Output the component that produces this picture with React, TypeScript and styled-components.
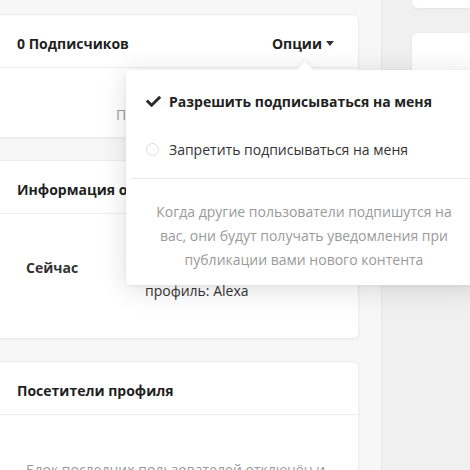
import React from 'react';
import styled, { createGlobalStyle } from 'styled-components';

const GlobalStyle = createGlobalStyle`
  html, body {
    margin: 0;
    padding: 0;
    background: #f6f6f6;
  }
  body {
    font-family: 'Open Sans', 'Noto Sans', sans-serif;
    font-size: 14px;
    color: #222;
  }
`;

const Page = styled.div`
  position: relative;
  display: flex;
  width: 470px;
  height: 470px;
  overflow: hidden;
`;

const Main = styled.div`
  width: 357px;
  flex-shrink: 0;
  padding: 14px 24px 0 0;
  display: flex;
  flex-direction: column;
  gap: 22px;
  background: #f7f7f7;
  border-right: 1px solid #e6e6e6;
`;

const Sidebar = styled.div`
  flex: 1;
  padding-left: 30px;
  margin-top: -40px;
  display: flex;
  flex-direction: column;
  gap: 25px;
  background: #f0f0f0;
`;

const SideCard = styled.div<{ $h: number }>`
  height: ${(p) => p.$h}px;
  background: #fff;
  border-radius: 6px 0 0 6px;
  box-shadow: 0 1px 3px rgba(0, 0, 0, 0.05);
`;

const Card = styled.div`
  margin-left: -8px;
  width: 365px;
  background: #fff;
  border: 1px solid #ececec;
  border-radius: 6px;
  box-shadow: 0 1px 3px rgba(0, 0, 0, 0.04);
`;

const CardHeader = styled.div`
  height: 53px;
  padding: 4px 24px 0;
  display: flex;
  align-items: center;
  justify-content: space-between;
  border-bottom: 1px solid #ececec;
  font-weight: 700;
  font-size: 14px;
  color: #1f1f1f;
  box-sizing: border-box;
`;

const OptionsButton = styled.span`
  display: inline-flex;
  align-items: center;
  gap: 4px;
  font-weight: 700;
  color: #222;
  cursor: pointer;
`;

const Caret = styled.span`
  width: 0;
  height: 0;
  border-left: 4px solid transparent;
  border-right: 4px solid transparent;
  border-top: 5px solid #333;
  margin-top: 1px;
`;

const EmptyText = styled.div<{ $pt: number; $pb: number }>`
  padding: ${(p) => p.$pt}px 24px ${(p) => p.$pb}px;
  text-align: center;
  color: #9a9a9a;
  line-height: 20px;
`;

const InfoRow = styled.div`
  display: flex;
  align-items: center;
  padding: 17px 24px 35px 33px;
`;

const InfoLabel = styled.div`
  width: 119px;
  flex-shrink: 0;
  font-weight: 700;
  color: #333;
`;

const InfoValue = styled.div`
  line-height: 24px;
  color: #333;
`;

const Dropdown = styled.div`
  position: absolute;
  left: 126px;
  top: 70px;
  width: 356px;
  background: #fff;
  border-radius: 4px;
  box-shadow: 0 4px 28px rgba(0, 0, 0, 0.13), 0 1px 4px rgba(0, 0, 0, 0.06);
  &::before {
    content: '';
    position: absolute;
    top: -6px;
    left: 173px;
    width: 12px;
    height: 12px;
    background: #fff;
    transform: rotate(45deg);
    box-shadow: -2px -2px 4px rgba(0, 0, 0, 0.04);
  }
`;

const MenuList = styled.div`
  position: relative;
  padding: 7px 0 5px;
  border-bottom: 1px solid #e8e8e8;
  margin-left: 5px;
`;

const MenuItem = styled.div<{ $active?: boolean }>`
  height: 48px;
  display: flex;
  align-items: center;
  gap: 6px;
  padding-left: 14px;
  font-weight: ${(p) => (p.$active ? 700 : 400)};
  color: ${(p) => (p.$active ? '#222' : '#333')};
  cursor: pointer;
`;

const IconSlot = styled.span`
  width: 18px;
  display: inline-flex;
  align-items: center;
  justify-content: flex-start;
`;

const Radio = styled.span`
  width: 11px;
  height: 11px;
  margin-left: 1px;
  border: 1px solid #dcdcdc;
  border-radius: 50%;
`;

const MenuNote = styled.div`
  padding: 21px 20px 13px;
  text-align: center;
  line-height: 24px;
  color: #9a9a9a;
`;

function CheckIcon() {
  return (
    <svg width="17" height="15" viewBox="0 0 512 512" fill="#2b2b2b">
      <path d="M173.9 439.4l-166.4-166.4c-10-10-10-26.2 0-36.2l36.2-36.2c10-10 26.2-10 36.2 0L192 312.7 432.1 72.6c10-10 26.2-10 36.2 0l36.2 36.2c10 10 10 26.2 0 36.2L210.1 439.4c-10 10-26.2 10-36.2 0z" />
    </svg>
  );
}

export default function App() {
  return (
    <>
      <GlobalStyle />
      <Page>
        <Main>
          <Card>
            <CardHeader>
              <span>0 Подписчиков</span>
              <OptionsButton>
                Опции <Caret />
              </OptionsButton>
            </CardHeader>
            <EmptyText $pt={37} $pb={12}>Подписчиков нет</EmptyText>
          </Card>
          <Card>
            <CardHeader>
              <span>Информация о профиле</span>
            </CardHeader>
            <InfoRow>
              <InfoLabel>Сейчас</InfoLabel>
              <InfoValue>
                Последний посетитель
                <br />
                просматривал ваш
                <br />
                профиль: Alexa
              </InfoValue>
            </InfoRow>
          </Card>
          <Card>
            <CardHeader>
              <span>Посетители профиля</span>
            </CardHeader>
            <EmptyText $pt={45} $pb={20}>
              Блок последних пользователей отключён и скрыт от других
            </EmptyText>
          </Card>
        </Main>
        <Sidebar>
          <SideCard $h={48} />
          <SideCard $h={170} />
        </Sidebar>
        <Dropdown>
          <MenuList>
            <MenuItem $active>
              <IconSlot>
                <CheckIcon />
              </IconSlot>
              Разрешить подписываться на меня
            </MenuItem>
            <MenuItem>
              <IconSlot>
                <Radio />
              </IconSlot>
              Запретить подписываться на меня
            </MenuItem>
          </MenuList>
          <MenuNote>
            Когда другие пользователи подпишутся на вас, они будут получать
            уведомления при публикации вами нового контента
          </MenuNote>
        </Dropdown>
      </Page>
    </>
  );
}
